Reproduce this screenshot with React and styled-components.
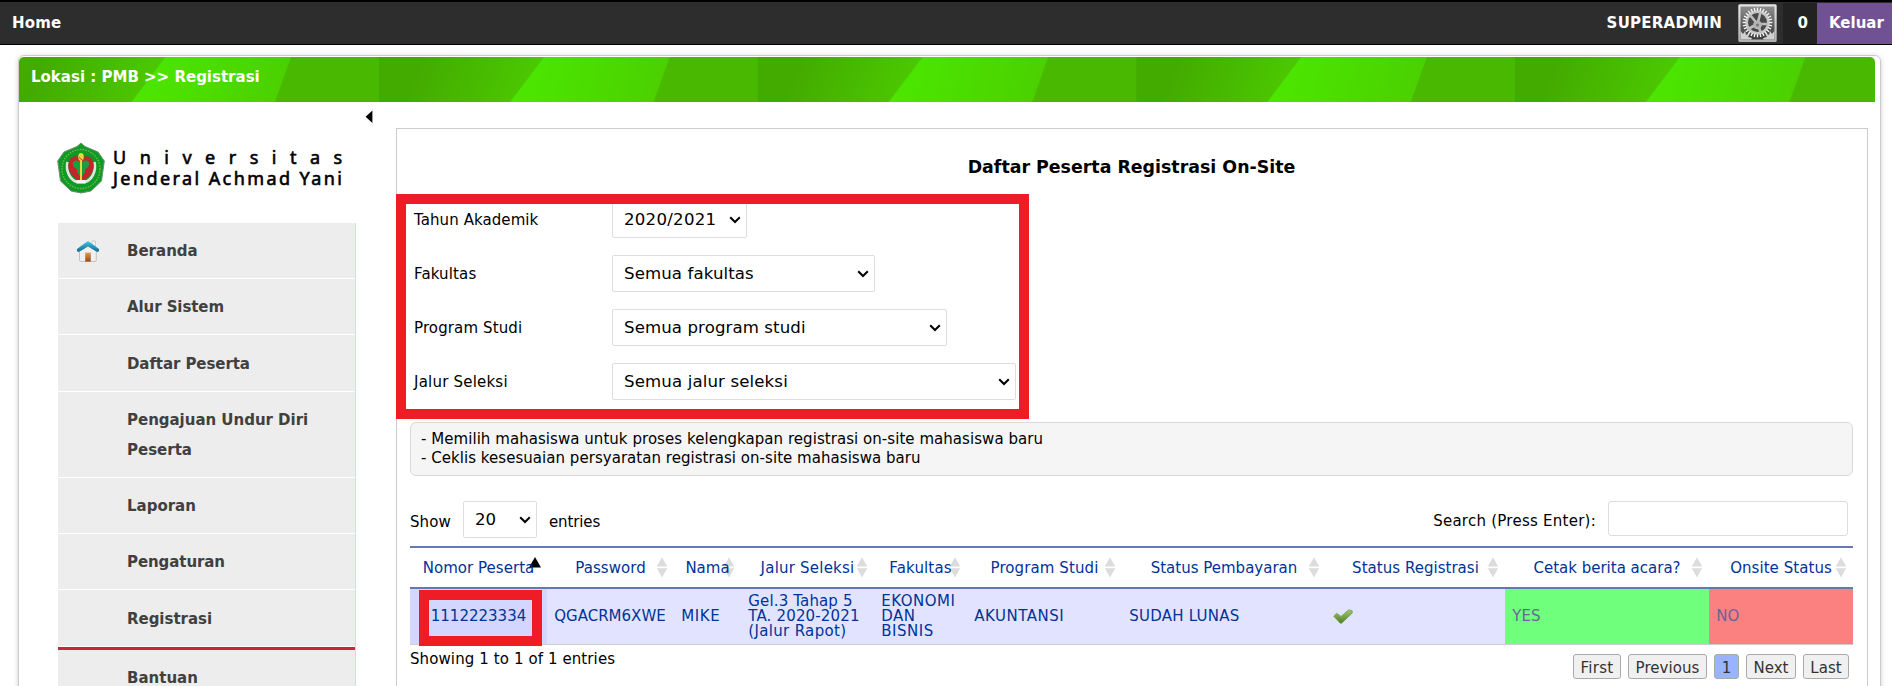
import React from "react";
import styled, { createGlobalStyle, css } from "styled-components";

const GlobalStyle = createGlobalStyle`
  *, *::before, *::after { box-sizing: border-box; }
  html, body { margin: 0; background: #fff; overflow: hidden; }
  body { font: 15px/20px Verdana, "DejaVu Sans", sans-serif; color: #000; }
`;

const Text = styled.span`
  letter-spacing: ${(p) => p.$ls || 0}px;
  white-space: nowrap;
`;

const Page = styled.div`
  height: 686px;
  overflow: hidden;
  display: flex;
  flex-direction: column;
`;

/* ---------- top bar ---------- */

const TopBar = styled.header`
  flex: none;
  height: 45px;
  display: flex;
  align-items: stretch;
  justify-content: space-between;
  background: #2d2d2d;
  border-top: 2px solid #000;
  border-bottom: 1px solid #000;
  color: #fff;
  font-weight: bold;
`;

const TopItem = styled.a`
  display: flex;
  align-items: center;
  color: #fff;
  padding-bottom: 1px;
`;

const HomeLink = styled(TopItem)`
  padding-left: 12px;
`;

const UserTools = styled.div`
  display: flex;
`;

const Avatar = styled.span`
  padding: 2px 5px 0 16px;
  height: 42px;
  display: block;
  svg { display: block; }
`;

const Counter = styled(TopItem)`
  width: 34px;
  margin-top: 1px;
  padding: 0 0 2px 14.5px;
  background: #222;
`;

const Logout = styled(TopItem)`
  width: 75px;
  margin-top: 1px;
  padding: 0 0 2px 12px;
  background: #6f5194;
`;

/* ---------- main panel ---------- */

const Panel = styled.div`
  flex: none;
  height: 700px;
  margin: 10px 11px 0 18px;
  border: 1px solid #ccc;
  border-radius: 6px;
  box-shadow: 0 1px 5px rgba(0, 0, 0, 0.2);
  padding-top: 1px;
`;

const LocationBar = styled.div`
  position: relative;
  isolation: isolate;
  height: 45px;
  width: 1856px;
  border-radius: 5px 5px 0 0;
  overflow: hidden;
  color: #fff;
  font-weight: bold;
  padding: 10px 0 0 12px;
`;

const Stripes = styled.svg`
  position: absolute;
  inset: 0;
  z-index: -1;
`;

const Body = styled.div`
  display: flex;
  padding-right: 12px;
`;

const Sidebar = styled.aside`
  width: 377px;
  flex: none;
  padding-left: 39px;
`;

const CollapseRow = styled.div`
  height: 40px;
  padding: 8px 23px 0 0;
  display: flex;
  justify-content: flex-end;
`;

const Brand = styled.div`
  height: 81px;
  display: flex;
  align-items: flex-start;
  margin-left: -1px;
`;

const BrandText = styled.div`
  margin: 5px 0 0 8px;
  font: 18px/21px "Noto Sans", sans-serif;
  color: #000;
  -webkit-text-stroke: 0.6px #000;
  display: flex;
  flex-direction: column;
`;

const Menu = styled.nav`
  width: 298px;
  border-right: 1px solid #f3d6b9;
`;

const MenuItem = styled.a`
  display: flex;
  align-items: flex-start;
  background: #ededed;
  color: #404040;
  font-weight: bold;
  line-height: 30px;
  padding: 13.2px 30px 12.05px 0;
  border-bottom: 1px solid #fff;
  ${(p) => p.$active && css`
    box-shadow: 0 3px 0 #c5283d;
    margin-bottom: 3px;
  `}
`;

const MenuIcon = styled.span`
  width: 69px;
  flex: none;
  padding: 4px 0 0 18px;
  svg { display: block; }
`;

/* ---------- content ---------- */

const Content = styled.main`
  flex: 1;
  height: 620px;
  margin-top: 26px;
  border: 1px solid #ccc;
  border-bottom: 0;
  padding: 27px 14px 0 13px;
`;

const Title = styled.h1`
  margin: 0;
  font-size: 17.4px;
  line-height: 22px;
  text-align: center;
  color: #000;
`;

const Highlight = styled.div`
  position: absolute;
  border: 10px solid #ee1c25;
  pointer-events: none;
  z-index: 2;
`;

const FormHighlight = styled(Highlight)`
  top: -7px;
  left: -14px;
  width: 633px;
  height: 225px;
`;

const CellHighlight = styled(Highlight)`
  top: 1px;
  left: 9px;
  right: 5px;
  bottom: -2px;
`;

const Filters = styled.form`
  position: relative;
  margin-top: 23px;
  display: flex;
  flex-direction: column;
  gap: 17px;
`;

const FilterRow = styled.label`
  display: flex;
  align-items: center;
  height: 37px;
  padding-left: 4px;
`;

const FilterName = styled.span`
  width: 198px;
`;

const SelectBox = styled.span`
  display: flex;
  align-items: center;
  justify-content: space-between;
  width: ${(p) => p.$w}px;
  height: 37px;
  padding: 0 5px 0 11px;
  border: 1px solid #ddd;
  border-radius: 2px;
  background: #fff;
  color: #000;
  font-size: 16.6px;
`;

const Notes = styled.div`
  margin-top: 22px;
  height: 54px;
  padding: 7px 0 7px 10px;
  border: 1px solid #d9d9d9;
  border-radius: 6px;
  background: #f5f5f5;
  line-height: 19px;
  display: flex;
  flex-direction: column;
`;

const TableTools = styled.div`
  margin-top: 25px;
  height: 45px;
  display: flex;
  justify-content: space-between;
  align-items: flex-start;
`;

const ToolGroup = styled.label`
  display: flex;
  align-items: center;
  gap: 12px;
  padding-right: ${(p) => p.$pr || 0}px;
`;

const ToolLabel = styled(Text)`
  padding-top: 4px;
`;

const SearchInput = styled.input`
  width: 240px;
  height: 35px;
  border: 1px solid #ddd;
  border-radius: 3px;
  background: #fff;
  outline: none;
`;

const Table = styled.table`
  width: 1443px;
  table-layout: fixed;
  border-collapse: separate;
  border-spacing: 0;
  color: #039;
`;

const Th = styled.th`
  position: relative;
  isolation: isolate;
  height: 43px;
  padding: 0;
  border: solid #6678b1;
  border-width: 2px 0;
  font-weight: normal;
  text-align: center;
`;

const SortIcon = styled.svg`
  position: absolute;
  top: 9px;
  right: ${(p) => (p.$active ? 5 : 6)}px;
  z-index: -1;
`;

const tones = {
  sorted: "#d3d6ff",
  plain: "#e2e4ff",
  yes: "#70ff7c",
  no: "#fb8080",
};

const Td = styled.td`
  position: relative;
  height: 56px;
  padding: 0 0 0 ${(p) => (p.$center ? 0 : 7.3)}px;
  border-bottom: 1px solid #ccc;
  background: ${(p) => tones[p.$tone || "plain"]};
  color: ${(p) => (p.$tone === "yes" || p.$tone === "no" ? "#669" : "#039")};
  line-height: 15px;
  text-align: ${(p) => (p.$center ? "center" : "left")};
  vertical-align: middle;
`;

const CheckHolder = styled.span`
  display: block;
  svg { display: block; }
`;

const TableFooter = styled.div`
  display: flex;
  justify-content: space-between;
  padding: 4px 4px 0 0;
`;

const Pager = styled.div`
  display: flex;
  gap: 7px;
  padding-top: 5px;
`;

const PageButton = styled.a`
  width: ${(p) => p.$w}px;
  height: 25px;
  padding-top: 2px;
  display: flex;
  align-items: center;
  justify-content: center;
  border: 1px solid #aaa;
  border-radius: 3px;
  background: ${(p) => (p.$current ? "#99b3ff" : "#f0f0f0")};
  color: #333;
`;

/* ---------- drawings ---------- */

const StripeArt = () => (
  <Stripes width="1856" height="45">
    <defs>
      <linearGradient id="dark" gradientUnits="userSpaceOnUse" x1="30" y1="0" x2="150" y2="50">
        <stop offset="0" stopColor="#43aa00" />
        <stop offset="0.1" stopColor="#43ab00" />
        <stop offset="1" stopColor="#4cca00" />
      </linearGradient>
      <linearGradient id="bright" gradientUnits="userSpaceOnUse" x1="145" y1="0" x2="285" y2="35">
        <stop offset="0" stopColor="#4ce600" />
        <stop offset="0.3" stopColor="#4be000" />
        <stop offset="1" stopColor="#4bd000" />
      </linearGradient>
      <pattern id="tile" patternUnits="userSpaceOnUse" x="-18.5" y="0" width="378.6" height="45">
        <rect width="379" height="45" fill="#49b800" />
        <path d="M0 0H166L131 45H0Z" fill="url(#dark)" />
        <path d="M165 0H290.5L274.5 45H131Z" fill="url(#bright)" />
      </pattern>
    </defs>
    <rect width="1856" height="45" fill="url(#tile)" />
  </Stripes>
);

const Chevron = () => (
  <svg width="12" height="8" viewBox="0 0 12 8">
    <path d="M1.2 1.2L6 6L10.8 1.2" fill="none" stroke="#000" strokeWidth="2" />
  </svg>
);

const teeth = Array.from({ length: 28 }, (_, i) => i * (360 / 28));

const GearImage = () => (
  <svg width="40" height="39" viewBox="0 0 40 39">
    <defs>
      <linearGradient id="frame" x1="0" y1="0" x2="0" y2="1">
        <stop offset="0" stopColor="#e6e6e6" />
        <stop offset="1" stopColor="#b0b0b0" />
      </linearGradient>
      <linearGradient id="back" x1="0" y1="0" x2="0" y2="1">
        <stop offset="0" stopColor="#8c8c8c" />
        <stop offset="1" stopColor="#3a3a3a" />
      </linearGradient>
      <clipPath id="inside"><rect x="2.5" y="2.5" width="34" height="33" /></clipPath>
    </defs>
    <rect x="0.3" y="0.3" width="38.4" height="37.6" rx="1.5" fill="url(#frame)" />
    <rect x="2.5" y="2.5" width="34" height="33" fill="url(#back)" />
    <g clipPath="url(#inside)">
      <g fill="#d0d0d0">
        <path d="M2 26L5 30L7 27L8 31L12 29L10 33L14 34L12 39H0Z" />
        <path d="M37 26L34 30L32 27L31 31L27 29L29 33L25 34L27 39H39Z" />
      </g>
      <circle cx="19.5" cy="18.5" r="10.8" fill="#484848" stroke="#c6c6c6" strokeWidth="2.6" />
      {teeth.map((a) => (
        <rect key={a} x="18.8" y="3.6" width="1.4" height="3.4" fill="#f2f2f2" transform={`rotate(${a} 19.5 18.5)`} />
      ))}
      <path d="M19.5 20L12 11M19.5 20L22.5 8M20 20L30 20M19.5 20L23 29M19.5 20L10 25" stroke="#bdbdbd" strokeWidth="2.6" />
      <circle cx="19.5" cy="20.8" r="4.4" fill="#b4b4b4" />
      <circle cx="19.5" cy="21" r="1.5" fill="#777" />
    </g>
  </svg>
);

const Emblem = () => (
  <svg width="48" height="52" viewBox="0 0 48 52">
    <path d="M24 1L28 4.5L41 10L47.3 19L44.5 39L34 49L24 51L14 49L3.5 39L0.7 19L7 10L20 4.5Z" fill="#0f9a28" stroke="#6d8f70" strokeWidth="1" />
    <ellipse cx="24" cy="27" rx="19" ry="19.5" fill="none" stroke="#6cbc38" strokeWidth="1.4" strokeDasharray="1.5 1.2" />
    <circle cx="24" cy="26.5" r="15" fill="#14932a" />
    <path d="M10.5 20C8.5 29 13 38 20 40H28C35 38 39.500 29 37.500 20" fill="none" stroke="#dfe8dc" strokeWidth="2.6" />
    <path d="M24 39.500C13 35 8.500 25 13 17.500C16 12.500 22 14 24 17C26 14 32 12.500 35 17.500C39.500 25 35 35 24 39.500Z" fill="#c2262b" />
    <path d="M16 20C19 17 22 19 24 21C26 19 29 17 32 20C33 24 30 27 28 27V30L24 36L20 30V27C18 27 15 24 16 20Z" fill="#1f9c3c" />
    <path d="M24 12V38" stroke="#e9d63a" strokeWidth="2" />
    <ellipse cx="24" cy="15" rx="2.8" ry="4" fill="#e9d63a" />
    <path d="M22 15.500L26 18.500" stroke="#a4581c" strokeWidth="1" />
    <path d="M19.5 38H28.5V41.500H19.5Z" fill="#f4f7f2" />
  </svg>
);

const House = () => (
  <svg width="24" height="23" viewBox="0 0 24 23">
    <defs>
      <linearGradient id="roof" x1="0" y1="0" x2="0" y2="1">
        <stop offset="0" stopColor="#3cc0e8" />
        <stop offset="1" stopColor="#146c8e" />
      </linearGradient>
      <linearGradient id="door" x1="0" y1="0" x2="0" y2="1">
        <stop offset="0" stopColor="#d99a55" />
        <stop offset="1" stopColor="#9c4a10" />
      </linearGradient>
    </defs>
    <path d="M16 1H19.4V8L16 5Z" fill="#f1f1f1" stroke="#c4c4c4" strokeWidth="0.8" />
    <path d="M3.5 10L12 4L20.3 10V20Q20.3 21.5 19 21.5H5Q3.5 21.5 3.5 20Z" fill="#f0f0f0" stroke="#bdbdbd" strokeWidth="0.9" />
    <path d="M12 1.2Q12.8 1.2 23 9Q23.6 11.6 21.4 12Q20.5 12 12 6.6Q3.6 12 2.6 12Q0.4 11.6 1 9Q11.2 1.2 12 1.2Z" fill="url(#roof)" />
    <rect x="9.2" y="12.6" width="5.6" height="9" fill="url(#door)" />
  </svg>
);

const Check = () => (
  <svg width="20" height="15" viewBox="0 0 20 15">
    <defs>
      <linearGradient id="tick" x1="0" y1="0" x2="0" y2="1">
        <stop offset="0" stopColor="#a3c96b" />
        <stop offset="1" stopColor="#4e7d27" />
      </linearGradient>
    </defs>
    <path d="M0.7 7.2L3.6 4.3L8 7.4L15.7 0.8L19.2 1.8V4.2L8.6 14.2H7.2Z" fill="url(#tick)" stroke="#6f9a45" strokeWidth="0.7" strokeLinejoin="round" />
  </svg>
);

const Sort = ({ active }) =>
  active ? (
    <SortIcon $active width="14" height="12" viewBox="0 0 14 12">
      <path d="M7 0L13 10.4H1Z" fill="#000" />
    </SortIcon>
  ) : (
    <SortIcon width="12" height="22" viewBox="0 0 12 22">
      <path d="M6 0.3L11.2 9.5H0.8ZM0.8 11.3H11.2L6 20.5Z" fill="#dcdcdc" />
    </SortIcon>
  );

/* ---------- data ---------- */

const menu = [
  { lines: [["Beranda", 0]], icon: <House /> },
  { lines: [["Alur Sistem", -0.08]] },
  { lines: [["Daftar Peserta", -0.08]] },
  { lines: [["Pengajuan Undur Diri", -0.02], ["Peserta", 0]] },
  { lines: [["Laporan", 0]] },
  { lines: [["Pengaturan", -0.08]] },
  { lines: [["Registrasi", -0.03]], active: true },
  { lines: [["Bantuan", 0]] },
];

const filters = [
  { name: "Tahun Akademik", ls: 0.08, value: "2020/2021", vls: 0.25, width: 135 },
  { name: "Fakultas", ls: 0.15, value: "Semua fakultas", vls: 0.1, width: 263 },
  { name: "Program Studi", ls: 0.12, value: "Semua program studi", vls: 0.1, width: 335 },
  { name: "Jalur Seleksi", ls: 0.21, value: "Semua jalur seleksi", vls: 0.13, width: 404 },
];

const columns = [
  ["Nomor Peserta", 137, 0.04],
  ["Password", 127, 0.06],
  ["Nama", 67, 0],
  ["Jalur Seleksi", 133, 0.21],
  ["Fakultas", 93, 0.15],
  ["Program Studi", 155, 0.1],
  ["Status Pembayaran", 204, 0],
  ["Status Registrasi", 179, 0.03],
  ["Cetak berita acara?", 204, 0],
  ["Onsite Status", 144, 0.05],
];

const pages = [
  ["First", 48, 0.3],
  ["Previous", 79, 0.06],
  ["1", 25, 0],
  ["Next", 50, 0],
  ["Last", 46, 0.1],
];

const Stack = ({ lines }) =>
  lines.map(([text, ls], i) => (
    <React.Fragment key={text}>
      {i > 0 && <br />}
      <Text $ls={ls}>{text}</Text>
    </React.Fragment>
  ));

export default function App() {
  return (
    <Page>
      <GlobalStyle />
      <TopBar>
        <HomeLink><Text $ls={0.2}>Home</Text></HomeLink>
        <UserTools>
          <TopItem><Text $ls={0.25}>SUPERADMIN</Text></TopItem>
          <Avatar><GearImage /></Avatar>
          <Counter>0</Counter>
          <Logout>Keluar</Logout>
        </UserTools>
      </TopBar>

      <Panel>
        <LocationBar>
          <StripeArt />
          <Text $ls={0}>Lokasi : PMB &gt;&gt; Registrasi</Text>
        </LocationBar>

        <Body>
          <Sidebar>
            <CollapseRow>
              <svg width="8" height="14" viewBox="0 0 8 14"><path d="M7.4 0.5V13L0.6 6.7Z" fill="#000" /></svg>
            </CollapseRow>
            <Brand>
              <Emblem />
              <BrandText>
                <Text $ls={13.5}>Universitas</Text>
                <Text $ls={2.42}>Jenderal Achmad Yani</Text>
              </BrandText>
            </Brand>
            <Menu>
              {menu.map((m) => (
                <MenuItem key={m.lines[0][0]} $active={m.active}>
                  <MenuIcon>{m.icon}</MenuIcon>
                  <span><Stack lines={m.lines} /></span>
                </MenuItem>
              ))}
            </Menu>
          </Sidebar>

          <Content>
            <Title><Text>Daftar Peserta Registrasi On-Site</Text></Title>

            <Filters>
              {filters.map((f) => (
                <FilterRow key={f.name}>
                  <FilterName><Text $ls={f.ls}>{f.name}</Text></FilterName>
                  <SelectBox $w={f.width}>
                    <Text $ls={f.vls}>{f.value}</Text>
                    <Chevron />
                  </SelectBox>
                </FilterRow>
              ))}
              <FormHighlight />
            </Filters>

            <Notes>
              <Text $ls={0.05}>- Memilih mahasiswa untuk proses kelengkapan registrasi on-site mahasiswa baru</Text>
              <Text $ls={0.04}>- Ceklis kesesuaian persyaratan registrasi on-site mahasiswa baru</Text>
            </Notes>

            <TableTools>
              <ToolGroup>
                <ToolLabel $ls={0.1}>Show</ToolLabel>
                <SelectBox $w={74}>
                  <Text>20</Text>
                  <Chevron />
                </SelectBox>
                <ToolLabel $ls={-0.1}>entries</ToolLabel>
              </ToolGroup>
              <ToolGroup $pr={5}>
                <ToolLabel $ls={0.25}>Search (Press Enter):</ToolLabel>
                <SearchInput />
              </ToolGroup>
            </TableTools>

            <Table>
              <colgroup>
                {columns.map(([name, width]) => <col key={name} width={width} />)}
              </colgroup>
              <thead>
                <tr>
                  {columns.map(([name, , ls], i) => (
                    <Th key={name}>
                      <Text $ls={ls}>{name}</Text>
                      <Sort active={i === 0} />
                    </Th>
                  ))}
                </tr>
              </thead>
              <tbody>
                <tr>
                  <Td $tone="sorted" $center>
                    <Text>1112223334</Text>
                    <CellHighlight />
                  </Td>
                  <Td><Text>QGACRM6XWE</Text></Td>
                  <Td><Text $ls={0.6}>MIKE</Text></Td>
                  <Td><Stack lines={[["Gel.3 Tahap 5", 0.14], ["TA. 2020-2021", 0.16], ["(Jalur Rapot)", 0.33]]} /></Td>
                  <Td><Stack lines={[["EKONOMI", 0.5], ["DAN", 0.5], ["BISNIS", 0.5]]} /></Td>
                  <Td><Text $ls={0.5}>AKUNTANSI</Text></Td>
                  <Td><Text $ls={0.23}>SUDAH LUNAS</Text></Td>
                  <Td><CheckHolder><Check /></CheckHolder></Td>
                  <Td $tone="yes"><Text>YES</Text></Td>
                  <Td $tone="no"><Text>NO</Text></Td>
                </tr>
              </tbody>
            </Table>

            <TableFooter>
              <Text $ls={0.1}>Showing 1 to 1 of 1 entries</Text>
              <Pager>
                {pages.map(([name, width, ls]) => (
                  <PageButton key={name} $w={width} $current={name === "1"}>
                    <Text $ls={ls}>{name}</Text>
                  </PageButton>
                ))}
              </Pager>
            </TableFooter>
          </Content>
        </Body>
      </Panel>
    </Page>
  );
}
